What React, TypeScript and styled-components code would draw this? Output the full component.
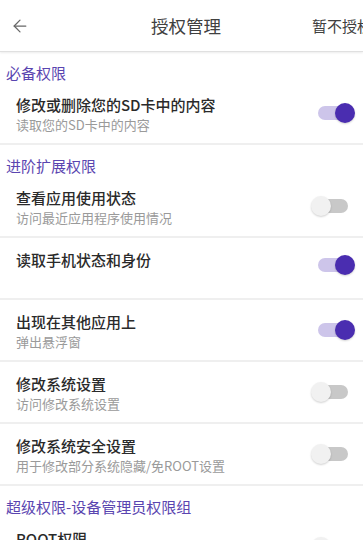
import styled, { createGlobalStyle } from 'styled-components';
import { ArrowLeft } from 'lucide-react';

const GlobalStyle = createGlobalStyle`
    html, body {
        margin: 0;
        padding: 0;
        background: #ffffff;
        overflow: hidden;
    }
    body {
        font-family: "Noto Sans CJK SC", "Noto Sans", Roboto, sans-serif;
    }
`;

const Page = styled.div`
    width: 363px;
    height: 540px;
    background: #ffffff;
    overflow: hidden;
`;

const AppBar = styled.header`
    height: 51px;
    display: flex;
    align-items: center;
    background: #ffffff;
    border-bottom: 1px solid #e0e0e0;
    box-shadow: 0 1px 2px rgba(0, 0, 0, 0.08);
`;

const BackBtn = styled.div`
    width: 60px;
    padding-left: 10px;
    box-sizing: border-box;
    display: flex;
    align-items: center;
    color: #676767;
`;

const Title = styled.h1`
    flex: 1;
    margin: 0;
    text-align: center;
    font-size: 17.5px;
    font-weight: 400;
    color: #404040;
`;

const SkipBtn = styled.div`
    width: 51px;
    white-space: nowrap;
    font-size: 15px;
    color: #404040;
`;

const SectionTitle = styled.div`
    padding: 11px 0 0 6px;
    line-height: 20px;
    font-size: 15px;
    color: #5a45b0;
`;

const Row = styled.div`
    display: flex;
    padding: 12px 8px 8px 16px;
    border-bottom: 2px solid #efefef;
`;

const RowText = styled.div`
    flex: 1;
    display: flex;
    flex-direction: column;
`;

const RowTitle = styled.span`
    font-size: 15px;
    line-height: 20px;
    font-weight: 500;
    color: #2a2a2a;
`;

const RowSub = styled.span`
    font-size: 13px;
    line-height: 20px;
    height: 20px;
    color: #9a9a9a;
`;

const Switch = styled.div<{ $offset: number }>`
    position: relative;
    width: 44px;
    height: 20px;
    margin-top: ${(p) => p.$offset}px;
`;

const Track = styled.div<{ $on: boolean }>`
    position: absolute;
    left: 7px;
    top: 3px;
    width: 30px;
    height: 14px;
    border-radius: 7px;
    background: ${(p) => (p.$on ? '#cdc5ea' : '#c8c8c8')};
`;

const Knob = styled.div<{ $on: boolean }>`
    position: absolute;
    top: 0;
    left: ${(p) => (p.$on ? '24px' : '0')};
    width: 20px;
    height: 20px;
    border-radius: 50%;
    background: ${(p) => (p.$on ? '#4a2db0' : '#f1f1f1')};
    box-shadow: 0 1px 2px rgba(0, 0, 0, 0.18);
`;

interface Perm {
    title: string;
    sub?: string;
    on: boolean;
}

interface Group {
    name: string;
    items: Perm[];
}

const groups: Group[] = [
    {
        name: '必备权限',
        items: [{ title: '修改或删除您的SD卡中的内容', sub: '读取您的SD卡中的内容', on: true }],
    },
    {
        name: '进阶扩展权限',
        items: [
            { title: '查看应用使用状态', sub: '访问最近应用程序使用情况', on: false },
            { title: '读取手机状态和身份', on: true },
            { title: '出现在其他应用上', sub: '弹出悬浮窗', on: true },
            { title: '修改系统设置', sub: '访问修改系统设置', on: false },
            { title: '修改系统安全设置', sub: '用于修改部分系统隐藏/免ROOT设置', on: false },
        ],
    },
    {
        name: '超级权限-设备管理员权限组',
        items: [{ title: 'ROOT权限', sub: '', on: false }],
    },
];

const Toggle = ({ on, offset }: { on: boolean; offset: number }) => (
    <Switch $offset={offset}>
        <Track $on={on} />
        <Knob $on={on} />
    </Switch>
);

export default function App() {
    return (
        <Page>
            <GlobalStyle />
            <AppBar>
                <BackBtn>
                    <ArrowLeft size={20} strokeWidth={1.5} />
                </BackBtn>
                <Title>授权管理</Title>
                <SkipBtn>暂不授权</SkipBtn>
            </AppBar>
            {groups.map((g) => (
                <section key={g.name}>
                    <SectionTitle>{g.name}</SectionTitle>
                    {g.items.map((item) => (
                        <Row key={item.title}>
                            <RowText>
                                <RowTitle>{item.title}</RowTitle>
                                <RowSub>{item.sub}</RowSub>
                            </RowText>
                            <Toggle on={item.on} offset={item.sub === undefined ? 5 : 8} />
                        </Row>
                    ))}
                </section>
            ))}
        </Page>
    );
}
